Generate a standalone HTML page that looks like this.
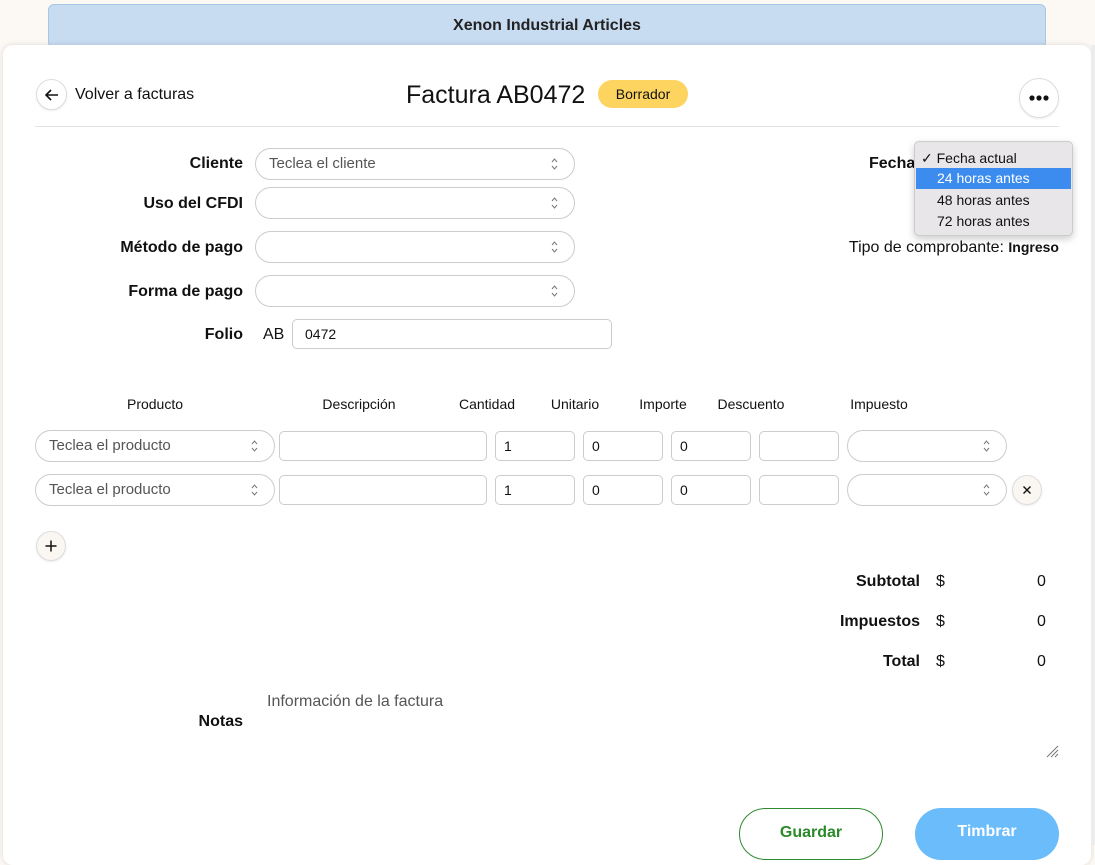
<!DOCTYPE html>
<html><head><meta charset="utf-8"><style>
*{box-sizing:border-box;margin:0;padding:0}
body{width:1095px;height:845px;overflow:hidden;background:#fcf8f4;font-family:"Liberation Sans",sans-serif;color:#111;position:relative}
.a{position:absolute}
.banner{left:48px;top:4px;width:998px;height:44px;background:#c8dcf1;border:1px solid #a8c7e6;border-radius:6px;text-align:center;line-height:42px;font-size:16px;font-weight:bold;color:#222}
.card{left:3px;top:45px;width:1088px;height:820px;background:#fff;border-radius:10px;box-shadow:0 0 6px rgba(0,0,0,.12)}
.strip{left:1091px;top:45px;width:4px;height:800px;background:#ececec}
.circ{border:1px solid #ddd;border-radius:50%;background:#fff;box-shadow:0 1px 2px rgba(0,0,0,.08);display:flex;align-items:center;justify-content:center}
.lbl{font-weight:bold;font-size:16px;text-align:right;width:220px;line-height:18px}
.sel{border:1px solid #ccc;border-radius:17px;height:32px;background:#fff;font-size:15px;color:#555;padding-left:13px;line-height:30px}
.arr{position:absolute;right:16px;top:9px}
.inp{border:1px solid #ccc;border-radius:5px;height:30px;background:#fff;font-size:14px;padding-left:8px;line-height:28px}
.th{font-size:14px;top:396px;transform:translateX(-50%)}
.tot{font-size:16px;line-height:18px}
</style></head><body>
<div class="a banner">Xenon Industrial Articles</div>
<div class="a card"></div>
<div class="a strip"></div>

<div class="a circ" style="left:36px;top:79px;width:31px;height:31px"><svg width="16" height="16" viewBox="0 0 16 16"><path d="M14 8H2M7 3L2 8l5 5" stroke="#111" stroke-width="1.6" fill="none"/></svg></div>
<div class="a" style="left:75px;top:86px;font-size:16px">Volver a facturas</div>
<div class="a" style="left:406px;top:81px;font-size:25px">Factura AB0472</div>
<div class="a" style="left:598px;top:80px;width:90px;height:28px;background:#fdd45f;border-radius:14px;font-size:14px;text-align:center;line-height:28px">Borrador</div>
<div class="a circ" style="left:1019px;top:78px;width:40px;height:40px"><svg width="20" height="6"><circle cx="3" cy="3" r="2.6" fill="#111"/><circle cx="10" cy="3" r="2.6" fill="#111"/><circle cx="17" cy="3" r="2.6" fill="#111"/></svg></div>
<div class="a" style="left:35px;top:126px;width:1024px;height:1px;background:#e2e2e2"></div>

<div class="a lbl" style="left:23px;top:155px">Cliente</div>
<div class="a lbl" style="left:23px;top:195px">Uso del CFDI</div>
<div class="a lbl" style="left:23px;top:239px">Método de pago</div>
<div class="a lbl" style="left:23px;top:283px">Forma de pago</div>
<div class="a lbl" style="left:23px;top:326px">Folio</div>

<div class="a sel" style="left:255px;top:148px;width:320px">Teclea el cliente<svg class="arr" width="7" height="12"><path d="M1 4l2.5-3 2.5 3M1 8l2.5 3 2.5-3" stroke="#777" fill="none"/></svg></div>
<div class="a sel" style="left:255px;top:187px;width:320px"><svg class="arr" width="7" height="12"><path d="M1 4l2.5-3 2.5 3M1 8l2.5 3 2.5-3" stroke="#777" fill="none"/></svg></div>
<div class="a sel" style="left:255px;top:231px;width:320px"><svg class="arr" width="7" height="12"><path d="M1 4l2.5-3 2.5 3M1 8l2.5 3 2.5-3" stroke="#777" fill="none"/></svg></div>
<div class="a sel" style="left:255px;top:275px;width:320px"><svg class="arr" width="7" height="12"><path d="M1 4l2.5-3 2.5 3M1 8l2.5 3 2.5-3" stroke="#777" fill="none"/></svg></div>
<div class="a" style="left:263px;top:326px;font-size:16px">AB</div>
<div class="a inp" style="left:292px;top:319px;width:320px;font-size:14px;padding-left:12px">0472</div>

<div class="a" style="left:869px;top:155px;font-size:16px;font-weight:bold">Fecha</div>
<div class="a" style="left:914px;top:141px;width:159px;height:95px;background:#e8e6e8;border:1px solid #ccc;border-radius:5px;box-shadow:0 3px 8px rgba(0,0,0,.2);font-size:14px">
 <div class="a" style="left:6px;top:8px">✓ Fecha actual</div>
 <div class="a" style="left:1px;top:26px;width:155px;height:21px;background:#3c8cf0;color:#fff;padding-left:21px;line-height:21px">24 horas antes</div>
 <div class="a" style="left:22px;top:50px">48 horas antes</div>
 <div class="a" style="left:22px;top:71px">72 horas antes</div>
</div>
<div class="a" style="right:36px;top:239px;font-size:16px;white-space:nowrap">Tipo de comprobante: <b style="font-size:14px">Ingreso</b></div>

<div class="a th" style="left:155px">Producto</div>
<div class="a th" style="left:359px">Descripción</div>
<div class="a th" style="left:487px">Cantidad</div>
<div class="a th" style="left:575px">Unitario</div>
<div class="a th" style="left:663px">Importe</div>
<div class="a th" style="left:751px">Descuento</div>
<div class="a th" style="left:879px">Impuesto</div>

<div class="a sel" style="left:35px;top:430px;width:240px">Teclea el producto<svg class="arr" width="7" height="12"><path d="M1 4l2.5-3 2.5 3M1 8l2.5 3 2.5-3" stroke="#777" fill="none"/></svg></div>
<div class="a inp" style="left:279px;top:431px;width:208px"></div>
<div class="a inp" style="left:495px;top:431px;width:80px">1</div>
<div class="a inp" style="left:583px;top:431px;width:80px">0</div>
<div class="a inp" style="left:671px;top:431px;width:80px">0</div>
<div class="a inp" style="left:759px;top:431px;width:80px"></div>
<div class="a sel" style="left:847px;top:430px;width:160px"><svg class="arr" width="7" height="12"><path d="M1 4l2.5-3 2.5 3M1 8l2.5 3 2.5-3" stroke="#777" fill="none"/></svg></div>

<div class="a sel" style="left:35px;top:474px;width:240px">Teclea el producto<svg class="arr" width="7" height="12"><path d="M1 4l2.5-3 2.5 3M1 8l2.5 3 2.5-3" stroke="#777" fill="none"/></svg></div>
<div class="a inp" style="left:279px;top:475px;width:208px"></div>
<div class="a inp" style="left:495px;top:475px;width:80px">1</div>
<div class="a inp" style="left:583px;top:475px;width:80px">0</div>
<div class="a inp" style="left:671px;top:475px;width:80px">0</div>
<div class="a inp" style="left:759px;top:475px;width:80px"></div>
<div class="a sel" style="left:847px;top:474px;width:160px"><svg class="arr" width="7" height="12"><path d="M1 4l2.5-3 2.5 3M1 8l2.5 3 2.5-3" stroke="#777" fill="none"/></svg></div>
<div class="a circ" style="left:1012px;top:475px;width:30px;height:30px;background:#faf6f1"><svg width="10" height="10"><path d="M1.5 1.5l7 7M8.5 1.5l-7 7" stroke="#111" stroke-width="1.4"/></svg></div>

<div class="a circ" style="left:36px;top:531px;width:30px;height:30px;background:#faf6f1"><svg width="12" height="12"><path d="M6 0.5v11M0.5 6h11" stroke="#111" stroke-width="1.5"/></svg></div>

<div class="a tot" style="right:175px;top:573px;font-weight:bold">Subtotal</div>
<div class="a tot" style="right:175px;top:613px;font-weight:bold">Impuestos</div>
<div class="a tot" style="right:175px;top:653px;font-weight:bold">Total</div>
<div class="a tot" style="left:936px;top:573px">$</div>
<div class="a tot" style="left:936px;top:613px">$</div>
<div class="a tot" style="left:936px;top:653px">$</div>
<div class="a tot" style="left:1037px;top:573px">0</div>
<div class="a tot" style="left:1037px;top:613px">0</div>
<div class="a tot" style="left:1037px;top:653px">0</div>

<div class="a lbl" style="left:23px;top:713px">Notas</div>
<div class="a" style="left:267px;top:693px;font-size:16px;color:#555">Información de la factura</div>
<svg class="a" style="left:1046px;top:745px" width="13" height="13"><path d="M12 1L1 12M12 5L5 12M12 9L9 12" stroke="#777" stroke-width="1"/></svg>

<div class="a" style="left:739px;top:808px;width:144px;height:52px;border:1.5px solid #2e8b2e;border-radius:26px;color:#2a8a2a;font-weight:bold;font-size:16px;text-align:center;line-height:48px">Guardar</div>
<div class="a" style="left:915px;top:808px;width:144px;height:52px;background:#6abcfb;border-radius:26px;color:#fff;font-weight:bold;font-size:16px;text-align:center;line-height:48px">Timbrar</div>
</body></html>
